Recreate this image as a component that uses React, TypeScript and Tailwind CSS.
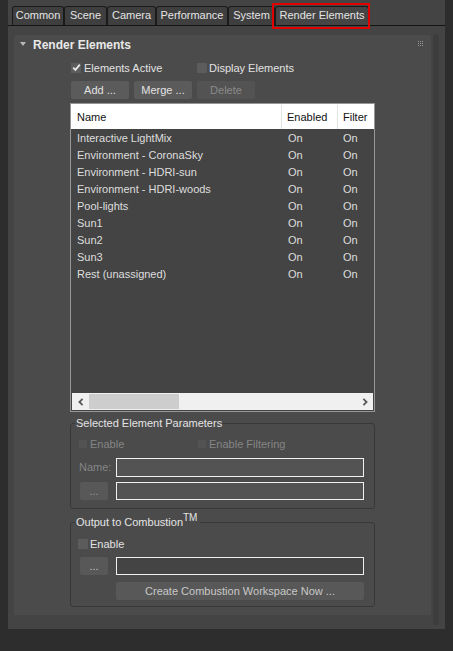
import React from "react";

const rows = [
  "Interactive LightMix",
  "Environment - CoronaSky",
  "Environment - HDRI-sun",
  "Environment - HDRI-woods",
  "Pool-lights",
  "Sun1",
  "Sun2",
  "Sun3",
  "Rest (unassigned)",
];

function Check({ checked = false, disabled = false }: { checked?: boolean; disabled?: boolean }) {
  return (
    <span
      className={
        "relative inline-flex w-[10px] h-[10px] shrink-0 items-center justify-center " +
        (disabled ? "bg-[#535353] border border-[#4a4a4a]" : "bg-[#5c5c5c]")
      }
    >
      {checked && (
        <svg width="9" height="9" viewBox="0 0 9 9" className="absolute left-[1px] top-[0px]">
          <path d="M1.2 4.6 L3.4 6.8 L7.8 1.6" stroke="#e8e8e8" strokeWidth="1.8" fill="none" />
        </svg>
      )}
    </span>
  );
}

function Tab({ label, w, active = false }: { label: string; w: string; active?: boolean }) {
  return (
    <div
      className={
        "relative h-[19px] flex items-center justify-center rounded-t-[3px] border border-b-0 border-[#1a1a1a] text-[11px] text-[#e4e4e4] pb-[1px] " +
        w +
        (active ? " bg-[#454545]" : " bg-[#3f3f3f]")
      }
    >
      {label}
      {active && (
        <span className="absolute -left-[4px] -top-[4px] w-[98px] h-[26px] border-2 border-[#e00000]" />
      )}
    </div>
  );
}

function Chevron({ dir }: { dir: "l" | "r" }) {
  return (
    <svg width="6" height="8" viewBox="0 0 6 8">
      {dir === "l" ? (
        <path d="M4.6 0.8 L1.4 4 L4.6 7.2" stroke="#5a5a5a" strokeWidth="1.8" fill="none" />
      ) : (
        <path d="M1.4 0.8 L4.6 4 L1.4 7.2" stroke="#5a5a5a" strokeWidth="1.8" fill="none" />
      )}
    </svg>
  );
}

export default function App() {
  return (
    <div className="w-[453px] h-[651px] bg-[#2d2d2d] overflow-hidden font-['Liberation_Sans',Arial,sans-serif] text-[11px] text-[#e2e2e2] leading-none">
      <div className="ml-[8px] w-[437px] h-[629px] bg-[#444444] flex flex-col">
        {/* tabs */}
        <div className="h-[26px] border-b border-[#141414] pt-[6px] pl-[4px] flex items-end">
          <Tab label="Common" w="w-[52px]" />
          <Tab label="Scene" w="w-[43px]" />
          <Tab label="Camera" w="w-[49px]" />
          <Tab label="Performance" w="w-[72px]" />
          <Tab label="System" w="w-[47px]" />
          <Tab label="Render Elements" w="w-[94px]" active />
        </div>

        {/* rollout area */}
        <div className="flex pl-[6px] pt-[9px]">
          <div className="w-[417px] h-[580px] bg-[#4b4b4b] rounded-t-[3px] flex flex-col">
            {/* header */}
            <div className="h-[20px] flex items-center pl-[6px] pr-[8px]">
              <svg width="6" height="5" viewBox="0 0 6 5" className="mt-[-2px]">
                <path d="M0 0 L6 0 L3 4 Z" fill="#b8b8b8" />
              </svg>
              <span className="ml-[7px] text-[12px] font-bold text-[#e8e8e8]">Render Elements</span>
              <div className="ml-auto grid grid-cols-3 gap-[1px] mt-[-3px]">
                {Array.from({ length: 9 }).map((_, i) => (
                  <span key={i} className="w-[1px] h-[1px] bg-[#959595]" />
                ))}
              </div>
            </div>

            {/* content */}
            <div className="pl-[56px] w-[361px] flex flex-col">
              {/* checkboxes */}
              <div className="mt-[7px] h-[12px] flex items-center pl-[1px]">
                <div className="w-[126px] flex items-center gap-[3px]">
                  <Check checked />
                  <span>Elements Active</span>
                </div>
                <div className="flex items-center gap-[2px]">
                  <Check />
                  <span>Display Elements</span>
                </div>
              </div>

              {/* buttons */}
              <div className="mt-[7px] pl-[1px] flex gap-[5px]">
                <button className="w-[58px] h-[18px] rounded-[2px] bg-[#5b5b5b] text-[#e2e2e2] text-[11px]">Add ...</button>
                <button className="w-[58px] h-[18px] rounded-[2px] bg-[#5b5b5b] text-[#e2e2e2] text-[11px]">Merge ...</button>
                <button className="w-[58px] h-[18px] rounded-[2px] bg-[#535353] text-[#8a8a8a] text-[11px]">Delete</button>
              </div>

              {/* list */}
              <div className="mt-[4px] w-[305px] h-[309px] border border-[#969696] bg-[#444444] flex flex-col">
                <div className="h-[25px] bg-white text-[#111] flex items-stretch shrink-0 pt-[1px]">
                  <div className="w-[211px] pl-[6px] flex items-center border-r border-[#e3e3e3]">Name</div>
                  <div className="w-[56px] pl-[5px] flex items-center border-r border-[#e3e3e3]">Enabled</div>
                  <div className="flex-1 pl-[5px] flex items-center">Filter</div>
                </div>
                <div className="flex-1 flex flex-col text-[#dedede] pt-[1px]">
                  {rows.map((r) => (
                    <div key={r} className="h-[17px] flex items-center">
                      <div className="w-[211px] pl-[6px]">{r}</div>
                      <div className="w-[56px] pl-[6px]">On</div>
                      <div className="flex-1 pl-[5px]">On</div>
                    </div>
                  ))}
                </div>
                <div className="h-[17px] bg-[#f0f0f0] flex items-center shrink-0 mx-[1px] mb-[1px]">
                  <div className="w-[17px] flex justify-center">
                    <Chevron dir="l" />
                  </div>
                  <div className="w-[90px] h-[15px] bg-[#cdcdcd]" />
                  <div className="flex-1" />
                  <div className="w-[17px] flex justify-center">
                    <Chevron dir="r" />
                  </div>
                </div>
              </div>

              {/* group 1 */}
              <div className="relative mt-[11px] w-[305px] h-[86px] border border-[#383838] rounded-[3px] pt-[14px] pl-[7px] flex flex-col">
                <span className="absolute left-[4px] -top-[6px] px-[1px] bg-[#4b4b4b] text-[#e4e4e4]">Selected Element Parameters</span>
                <div className="h-[12px] flex items-center text-[#858585]">
                  <div className="w-[119px] flex items-center gap-[2px]">
                    <Check disabled />
                    <span>Enable</span>
                  </div>
                  <div className="flex items-center gap-[2px]">
                    <Check disabled />
                    <span>Enable Filtering</span>
                  </div>
                </div>
                <div className="mt-[8px] h-[19px] flex items-center">
                  <span className="w-[38px] text-[#858585] pl-[1px]">Name:</span>
                  <div className="w-[248px] h-[19px] border border-[#f0f0f0] bg-[#535353]" />
                </div>
                <div className="mt-[5px] h-[18px] flex items-center">
                  <button className="ml-[2px] w-[28px] h-[18px] rounded-[2px] bg-[#585858] text-[#9a9a9a] text-[11px] leading-none">...</button>
                  <div className="ml-[8px] w-[248px] h-[18px] border border-[#f0f0f0] bg-[#535353]" />
                </div>
              </div>

              {/* group 2 */}
              <div className="relative mt-[13px] w-[305px] h-[85px] border border-[#383838] rounded-[3px] pt-[15px] pl-[7px] flex flex-col">
                <span className="absolute left-[4px] -top-[6px] pl-[1px] pr-[3px] bg-[#4b4b4b] text-[#e4e4e4] flex items-start">
                  <span>Output to Combustion</span>
                  <span className="text-[10px] -mt-[4px]">TM</span>
                </span>
                <div className="h-[12px] flex items-center">
                  <div className="flex items-center gap-[2px]">
                    <Check />
                    <span>Enable</span>
                  </div>
                </div>
                <div className="mt-[7px] h-[18px] flex items-center">
                  <button className="ml-[2px] w-[28px] h-[18px] rounded-[2px] bg-[#585858] text-[#c4c4c4] text-[11px] leading-none">...</button>
                  <div className="ml-[8px] w-[248px] h-[18px] border border-[#f0f0f0] bg-[#444444]" />
                </div>
                <div className="mt-[7px] ml-[38px] w-[248px] h-[18px] rounded-[2px] bg-[#585858] text-[#c8c8c8] flex items-center justify-center">
                  Create Combustion Workspace Now ...
                </div>
              </div>
            </div>
          </div>
          <div className="ml-[2px] -mt-[1px] w-[6px] h-[591px] rounded-[3px] bg-[#3d3d3d]" />
        </div>
      </div>
    </div>
  );
}
